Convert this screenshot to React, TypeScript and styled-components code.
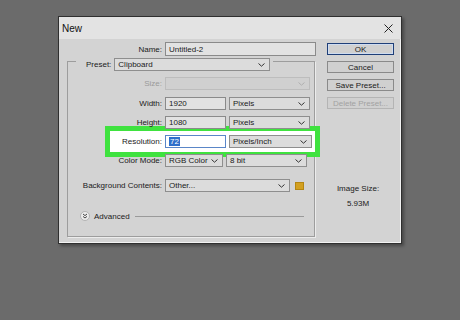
import React from 'react'
import styled, { createGlobalStyle, css } from 'styled-components'

const GlobalStyle = createGlobalStyle`
  html, body {
    margin: 0;
    padding: 0;
    background: #6b6b6b;
  }
  body {
    width: 460px;
    height: 320px;
    overflow: hidden;
    font-family: 'Liberation Sans', Arial, sans-serif;
    font-size: 8px;
    color: #1a1a1a;
  }
`

const Dialog = styled.div`
  margin: 16px 0 0 58px;
  width: 342px;
  height: 226px;
  border: 1px solid #2f2f2f;
  background: #d3d3d3;
  box-shadow: inset -1px -1px 0 #f2f2f2, 2px 2px 3px rgba(0, 0, 0, 0.35);
  display: flex;
  flex-direction: column;
`

const TitleBar = styled.div`
  height: 22px;
  background: #e3e3e3;
  display: flex;
  align-items: center;
  justify-content: space-between;
  padding: 0 8px 0 3px;
`

const Title = styled.span`
  font-size: 10px;
  color: #111;
`

const Body = styled.div`
  flex: 1;
  display: flex;
`

const LeftColumn = styled.div`
  width: 261px;
  display: flex;
  flex-direction: column;
`

const RightColumn = styled.div`
  width: 81px;
  display: flex;
  flex-direction: column;
  align-items: center;
  padding-top: 4px;
`

const Row = styled.div<{ $mt?: number; $label: number }>`
  display: grid;
  grid-template-columns: ${({ $label }) => $label}px auto;
  column-gap: 3px;
  align-items: center;
  height: 13px;
  margin-top: ${({ $mt }) => $mt ?? 0}px;
`

const HighlightRow = styled(Row)`
  height: 13px;
  margin-left: 37px;
  margin-right: -6px;
  padding: 4px 0;
  border: 5px solid #3fe23f;
  background: #ffffff;
`

const Label = styled.span<{ $disabled?: boolean }>`
  text-align: right;
  white-space: nowrap;
  color: ${({ $disabled }) => ($disabled ? '#9a9a9a' : '#1a1a1a')};
`

const Controls = styled.div`
  display: flex;
  align-items: center;
  gap: 3px;
`

const Input = styled.div<{ $w: number; $focus?: boolean }>`
  box-sizing: border-box;
  width: ${({ $w }) => $w}px;
  height: 13px;
  padding: 0 3px;
  display: flex;
  align-items: center;
  background: #e2e2e2;
  border: 1px solid #8a8a8a;
  ${({ $focus }) =>
    $focus &&
    css`
      background: #ffffff;
      border-color: #5a86c8;
    `}
`

const Selected = styled.span`
  background: #2f6fca;
  color: #ffffff;
  padding: 0 1px;
  line-height: 9px;
`

const Select = styled.div<{ $w: number; $disabled?: boolean }>`
  box-sizing: border-box;
  width: ${({ $w }) => $w}px;
  height: 13px;
  padding: 0 4px 0 3px;
  display: flex;
  align-items: center;
  justify-content: space-between;
  background: ${({ $disabled }) => ($disabled ? '#d0d0d0' : '#dcdcdc')};
  border: 1px solid ${({ $disabled }) => ($disabled ? '#bdbdbd' : '#8e8e8e')};
  color: #1a1a1a;
`

const Group = styled.fieldset`
  margin: -4px 0 0 8px;
  padding: 0 0 15px 0;
  width: 246px;
  border: 1px solid #9d9d9d;
  box-shadow: 1px 1px 0 #ececec;
  min-width: 0;
`

const Legend = styled.legend`
  margin-left: 8px;
  padding: 6px 3px 0 10px;
  display: flex;
  align-items: center;
  gap: 3px;
`

const ColorChip = styled.span`
  width: 9px;
  height: 8px;
  margin-left: 2px;
  background: #d3a020;
  border: 1px solid #b58612;
  box-sizing: border-box;
`

const AdvancedRow = styled.div`
  display: flex;
  align-items: center;
  height: 10px;
  margin: 19px 10px 0 12px;
  gap: 4px;
`

const AdvancedRule = styled.span`
  flex: 1;
  height: 1px;
  background: #9a9a9a;
  margin-left: 1px;
`

const Button = styled.div<{ $primary?: boolean; $disabled?: boolean }>`
  box-sizing: border-box;
  width: 67px;
  height: 12px;
  margin-bottom: 6px;
  display: flex;
  align-items: center;
  justify-content: center;
  background: #d0d0d0;
  border: 1px solid ${({ $primary }) => ($primary ? '#1f3f78' : '#8a8a8a')};
  ${({ $primary }) =>
    $primary &&
    css`
      box-shadow: inset 0 0 0 1px #cfdcf0;
    `}
  color: ${({ $disabled }) => ($disabled ? '#a2a2a2' : '#1a1a1a')};
  ${({ $disabled }) =>
    $disabled &&
    css`
      border-color: #b4b4b4;
    `}
`

const ImageSize = styled.div`
  margin-top: 66px;
  margin-left: -5px;
  text-align: center;
  line-height: 15px;
`

const Chevron = ({ color = '#333' }: { color?: string }) => (
  <svg width="7" height="4" viewBox="0 0 7 4">
    <path d="M0.5 0.5 L3.5 3.2 L6.5 0.5" fill="none" stroke={color} strokeWidth="1" />
  </svg>
)

const CloseIcon = () => (
  <svg width="9" height="9" viewBox="0 0 9 9">
    <path d="M0.5 0.5 L8.5 8.5 M8.5 0.5 L0.5 8.5" stroke="#222" strokeWidth="1" />
  </svg>
)

const AdvancedIcon = () => (
  <svg width="10" height="10" viewBox="0 0 10 10">
    <circle cx="5" cy="5" r="4.5" fill="#ececec" stroke="#a8a8a8" strokeWidth="0.8" />
    <path d="M3 3 L5 4.6 L7 3 M3 5.4 L5 7 L7 5.4" fill="none" stroke="#333" strokeWidth="0.9" />
  </svg>
)

const Dropdown = ({ w, value, disabled }: { w: number; value?: string; disabled?: boolean }) => (
  <Select $w={w} $disabled={disabled}>
    <span>{value}</span>
    <Chevron color={disabled ? '#b0b0b0' : '#333'} />
  </Select>
)

export default function App() {
  return (
    <>
      <GlobalStyle />
      <Dialog>
        <TitleBar>
          <Title>New</Title>
          <CloseIcon />
        </TitleBar>
        <Body>
          <LeftColumn>
            <Row $label={103} $mt={3} style={{ height: 14 }}>
              <Label>Name:</Label>
              <Input $w={151} style={{ height: 14 }}>Untitled-2</Input>
            </Row>
            <Group>
              <Legend>
                <Label>Preset:</Label>
                <Dropdown w={156} value="Clipboard" />
              </Legend>
              <Row $label={94} $mt={6}>
                <Label $disabled>Size:</Label>
                <Dropdown w={145} disabled />
              </Row>
              <Row $label={94} $mt={7}>
                <Label>Width:</Label>
                <Controls>
                  <Input $w={61}>1920</Input>
                  <Dropdown w={81} value="Pixels" />
                </Controls>
              </Row>
              <Row $label={94} $mt={6}>
                <Label>Height:</Label>
                <Controls>
                  <Input $w={61}>1080</Input>
                  <Dropdown w={81} value="Pixels" />
                </Controls>
              </Row>
              <HighlightRow $label={52} $mt={-3}>
                <Label>Resolution:</Label>
                <Controls>
                  <Input $w={61} $focus>
                    <Selected>72</Selected>
                  </Input>
                  <Dropdown w={83} value="Pixels/Inch" />
                </Controls>
              </HighlightRow>
              <Row $label={94} $mt={-3}>
                <Label>Color Mode:</Label>
                <Controls>
                  <Dropdown w={58} value="RGB Color" />
                  <Dropdown w={81} value="8 bit" />
                </Controls>
              </Row>
              <Row $label={94} $mt={12}>
                <Label>Background Contents:</Label>
                <Controls>
                  <Dropdown w={125} value="Other..." />
                  <ColorChip />
                </Controls>
              </Row>
              <AdvancedRow>
                <AdvancedIcon />
                <span>Advanced</span>
                <AdvancedRule />
              </AdvancedRow>
            </Group>
          </LeftColumn>
          <RightColumn>
            <Button $primary>OK</Button>
            <Button>Cancel</Button>
            <Button>Save Preset...</Button>
            <Button $disabled>Delete Preset...</Button>
            <ImageSize>
              <div>Image Size:</div>
              <div>5.93M</div>
            </ImageSize>
          </RightColumn>
        </Body>
      </Dialog>
    </>
  )
}
